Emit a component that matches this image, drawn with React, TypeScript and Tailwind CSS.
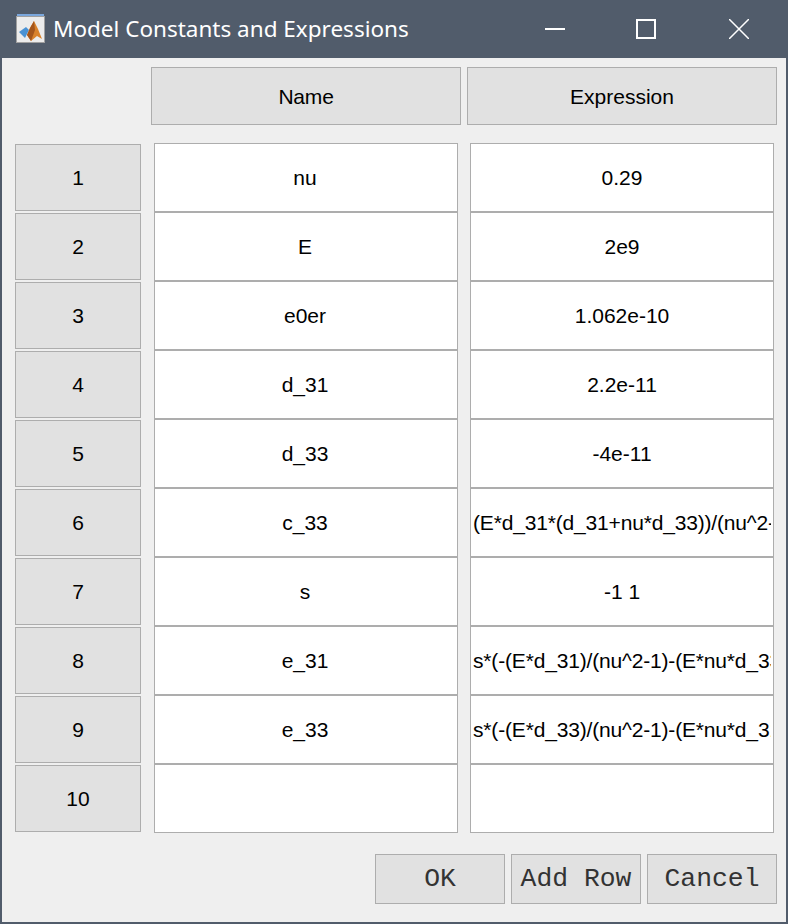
const rows = [
  { name: 'nu', expr: '0.29' },
  { name: 'E', expr: '2e9' },
  { name: 'e0er', expr: '1.062e-10' },
  { name: 'd_31', expr: '2.2e-11' },
  { name: 'd_33', expr: '-4e-11' },
  { name: 'c_33', expr: '(E*d_31*(d_31+nu*d_33))/(nu^2-1)-(E*d_33*(nu*d_31+d_33))/(nu^2-1)' },
  { name: 's', expr: '-1 1' },
  { name: 'e_31', expr: 's*(-(E*d_31)/(nu^2-1)-(E*nu*d_33)/(nu^2-1))' },
  { name: 'e_33', expr: 's*(-(E*d_33)/(nu^2-1)-(E*nu*d_31)/(nu^2-1))' },
  { name: '', expr: '' },
]

function MatlabIcon() {
  return (
    <svg width="30" height="30" viewBox="0 0 30 30" className="shrink-0">
      <rect x="1" y="0" width="27" height="2" fill="#7ba7dc" />
      <rect x="0.5" y="2.5" width="28" height="26" fill="#ececec" stroke="#a0a0a0" />
      <polygon points="3,18 10,13 13,16 9,24" fill="#4a92d4" />
      <polygon points="18,7 22,15 26,25 21,22 15,27 11,21 14,14" fill="#d9822b" />
      <polygon points="18,7 19,16 15,27 11,21 14,14" fill="#a4561c" />
    </svg>
  )
}

function Cell({ value, long, nudge }: { value: string; long?: boolean; nudge?: boolean }) {
  return (
    <input
      readOnly
      value={value}
      className={`w-full h-[69px] bg-white border border-[#adadad] text-center text-[21px] text-black outline-none ${long ? 'tracking-[-0.17px]' : ''} ${nudge ? 'pl-0 pr-[2px]' : 'px-[2px]'}`}
    />
  )
}

export default function App() {
  return (
    <div className="w-[788px] h-[924px] flex flex-col border-2 border-t-0 border-[#515c6b] bg-[#efefef] font-['Liberation_Sans',sans-serif] overflow-hidden">
      {/* Title bar */}
      <div className="h-[58px] shrink-0 -mx-[2px] pl-[16px] pr-[3px] flex items-center bg-[#515c6b] text-white">
        <MatlabIcon />
        <span className="ml-[7px] font-['Noto_Sans',sans-serif] text-[22.5px] leading-none">Model Constants and Expressions</span>
        <div className="ml-auto flex items-center">
          <button className="w-[92px] flex justify-center">
            <span className="block w-[20px] h-[2px] bg-white" />
          </button>
          <button className="w-[92px] flex justify-center">
            <span className="block w-[20px] h-[20px] mr-[2px] border-2 border-white" />
          </button>
          <button className="w-[92px] flex justify-center">
            <svg width="20" height="20" viewBox="0 0 20 20" stroke="#fff" strokeWidth="1.5">
              <path d="M0 0 L20 20 M20 0 L0 20" />
            </svg>
          </button>
        </div>
      </div>

      {/* Column headers */}
      <div className="flex gap-[6px] ml-[149px] mt-[9px]">
        <div className="w-[310px] h-[58px] pt-px flex items-center justify-center bg-[#e1e1e1] border border-[#adadad] text-[21px] tracking-[-0.2px] text-black">Name</div>
        <div className="w-[310px] h-[58px] pt-px flex items-center justify-center bg-[#e1e1e1] border border-[#adadad] text-[21px] text-black">Expression</div>
      </div>

      {/* Rows */}
      <div className="flex flex-col mt-[18px] ml-[13px]">
        {rows.map((row, i) => (
          <div key={i} className="flex items-center h-[69px]">
            <div className="w-[126px] h-[67px] flex items-center justify-center bg-[#e1e1e1] border border-[#adadad] text-[21px] text-black">{i + 1}</div>
            <div className="w-[304px] ml-[13px]"><Cell value={row.name} nudge /></div>
            <div className="w-[304px] ml-[12px]"><Cell value={row.expr} long={row.expr.length > 20} /></div>
          </div>
        ))}
      </div>

      {/* Footer buttons */}
      <div className="flex justify-end gap-[6px] mt-[21px] mr-[9px] font-['Liberation_Mono',monospace] text-[26.4px] text-[#333]">
        <button className="w-[130px] h-[50px] pt-px bg-[#e1e1e1] border border-[#adadad]">OK</button>
        <button className="w-[130px] h-[50px] pt-px bg-[#e1e1e1] border border-[#adadad]">Add Row</button>
        <button className="w-[130px] h-[50px] pt-px bg-[#e1e1e1] border border-[#adadad]">Cancel</button>
      </div>
    </div>
  )
}
